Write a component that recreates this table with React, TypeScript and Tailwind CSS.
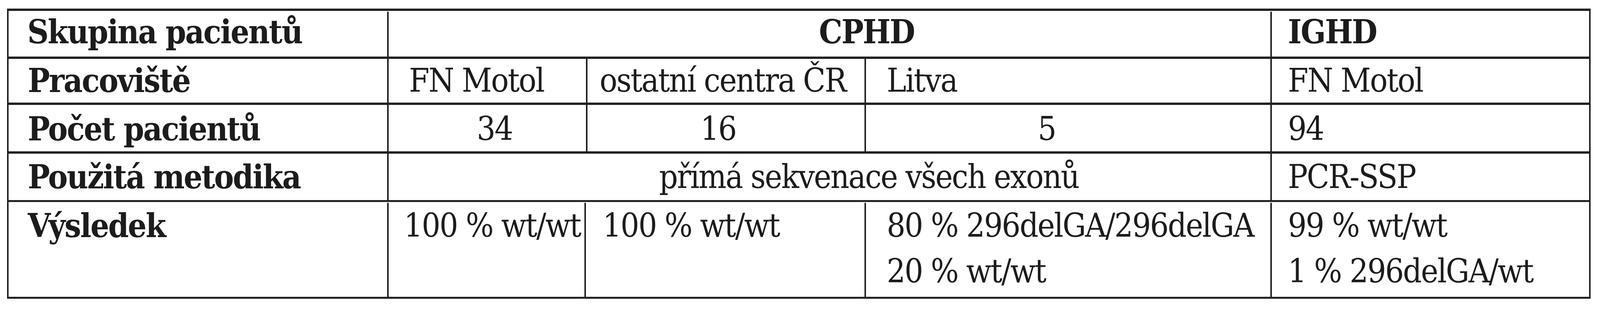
const line = "border-[#222222]";

function Cell({
  w,
  className = "",
  last = false,
  children,
}: {
  w: string;
  className?: string;
  last?: boolean;
  children?: React.ReactNode;
}) {
  return (
    <div
      className={`${w} shrink-0 whitespace-nowrap ${last ? "" : "border-r-4"} ${line} ${className}`}
    >
      {children}
    </div>
  );
}

export default function App() {
  return (
    <div className="w-full h-[800px] bg-white font-['DejaVu_Serif_Condensed','DejaVu_Serif',serif] font-stretch-condensed text-[84px] tracking-[-2.5px] text-[#1c1c1c]">
      <div className="pt-[22px] pl-[18px]">
        <div className={`w-[4054px] border-t-[6px] border-x-4 border-b-[5px] ${line}`}>
          {/* Skupina pacientů */}
          <div className={`flex h-[123px] border-b-[6px] ${line} leading-[103px] pt-[2px]`}>
            <Cell w="w-[973px]" className="pl-[48px] font-bold">Skupina pacientů</Cell>
            <Cell w="w-[2261px]" className="pl-[190px] text-center font-bold">CPHD</Cell>
            <Cell w="w-[812px]" last className="pl-[41px] font-bold">IGHD</Cell>
          </div>

          {/* Pracoviště */}
          <div className={`flex h-[118px] border-b-[6px] ${line} leading-[103px]`}>
            <Cell w="w-[973px]" className="pl-[49px] pt-[4px] font-bold">Pracoviště</Cell>
            <Cell w="w-[509px]" className="pl-[52px] pt-[4px]">FN Motol</Cell>
            <Cell w="w-[713px]" className="pl-[31px] pt-[4px]">ostatní centra ČR</Cell>
            <Cell w="w-[1039px]" className="pl-[53px] pt-[4px]">Litva</Cell>
            <Cell w="w-[812px]" last className="pl-[41px] pt-[4px]">FN Motol</Cell>
          </div>

          {/* Počet pacientů */}
          <div className={`flex h-[125px] border-b-[6px] ${line} leading-[103px]`}>
            <Cell w="w-[973px]" className="pl-[49px] pt-[10px] font-bold">Počet pacientů</Cell>
            <Cell w="w-[509px]" className="pl-[37px] pt-[10px] text-center">34</Cell>
            <Cell w="w-[713px]" className="pr-[40px] pt-[10px] text-center">16</Cell>
            <Cell w="w-[1039px]" className="pr-[110px] pt-[10px] text-center">5</Cell>
            <Cell w="w-[812px]" last className="pl-[41px] pt-[10px]">94</Cell>
          </div>

          {/* Použitá metodika */}
          <div className={`flex h-[124px] border-b-[5px] ${line} leading-[103px]`}>
            <Cell w="w-[973px]" className="pl-[49px] pt-[8px] font-bold">Použitá metodika</Cell>
            <Cell w="w-[2261px]" className="pl-[202px] pt-[8px] text-center">přímá sekvenace všech exonů</Cell>
            <Cell w="w-[812px]" last className="pl-[41px] pt-[8px]">PCR-SSP</Cell>
          </div>

          {/* Výsledek */}
          <div className="flex h-[243px] leading-[117px] pt-[2px]">
            <Cell w="w-[973px]" className="pl-[49px] font-bold">Výsledek</Cell>
            <Cell w="w-[505px]" className="pr-[10px] text-right">100 % wt/wt</Cell>
            <Cell w="w-[717px]" className="pl-[43px]">100 % wt/wt</Cell>
            <Cell w="w-[1039px]" className="pl-[53px]">
              <div>80 % 296delGA/296delGA</div>
              <div>20 % wt/wt</div>
            </Cell>
            <Cell w="w-[812px]" last className="pl-[41px]">
              <div>99 % wt/wt</div>
              <div>1 % 296delGA/wt</div>
            </Cell>
          </div>
        </div>
      </div>
    </div>
  );
}
